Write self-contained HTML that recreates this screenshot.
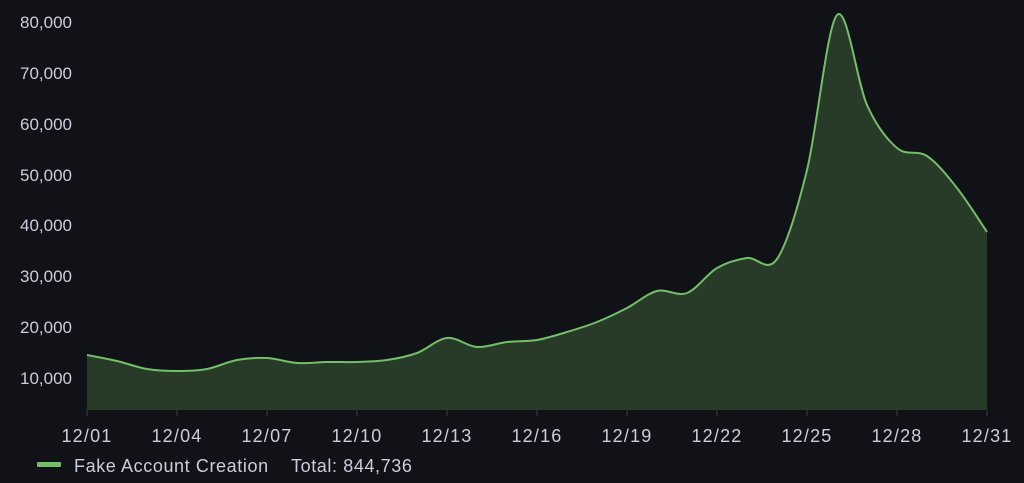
<!DOCTYPE html>
<html><head><meta charset="utf-8"><style>
html,body{margin:0;padding:0;background:#111217;width:1024px;height:483px;overflow:hidden}
svg{display:block}
text{font-family:"Liberation Sans",sans-serif;fill:#ccccdc;font-size:17px}
.xl text{font-size:18px;letter-spacing:1.2px}
.lg{font-size:18px;letter-spacing:0.6px}
</style></head><body>
<svg id="s" width="1024" height="483" viewBox="0 0 1024 483">
<g text-anchor="end">
<text x="72" y="28">80,000</text>
<text x="72" y="79">70,000</text>
<text x="72" y="130">60,000</text>
<text x="72" y="181">50,000</text>
<text x="72" y="231">40,000</text>
<text x="72" y="282">30,000</text>
<text x="72" y="333">20,000</text>
<text x="72" y="384">10,000</text>
</g>
<path id="area" fill="#283a28" d=""/>
<path id="line" fill="none" stroke="#73bf69" stroke-width="2" d=""/>
<g stroke="#3a3c42" stroke-width="1" id="ticks"></g>
<g text-anchor="middle" id="xl" class="xl"></g>
<rect x="37" y="462" width="24" height="5" rx="1" fill="#73bf69"/>
<text class="lg" x="74" y="472">Fake Account Creation</text>
<text class="lg" x="291" y="472">Total: 844,736</text>
</svg>
<script>
var ys=[355,361,369,371,369,360,358,363,362,362,360,353,338,347,342,340,332,322,308,291,293,268,258,259,170,15,105,148,156,188,232];
var p=ys.map(function(y,i){return [87+30*i,y]});
var d="M"+p[0][0]+","+p[0][1];
for(var i=0;i<p.length-1;i++){
 var p0=p[i-1]||p[i],p1=p[i],p2=p[i+1],p3=p[i+2]||p2;
 var c1=[p1[0]+(p2[0]-p0[0])/6,p1[1]+(p2[1]-p0[1])/6];
 var c2=[p2[0]-(p3[0]-p1[0])/6,p2[1]-(p3[1]-p1[1])/6];
 d+=" C"+c1[0]+","+c1[1]+" "+c2[0]+","+c2[1]+" "+p2[0]+","+p2[1];
}
document.getElementById("line").setAttribute("d",d);
document.getElementById("area").setAttribute("d",d+" L987,410 L87,410 Z");
var tk=document.getElementById("ticks"),xl=document.getElementById("xl");
var labs=["12/01","12/04","12/07","12/10","12/13","12/16","12/19","12/22","12/25","12/28","12/31"];
var ns="http://www.w3.org/2000/svg";
labs.forEach(function(l,i){
 var x=87+90*i;
 var ln=document.createElementNS(ns,"line");
 ln.setAttribute("x1",x);ln.setAttribute("x2",x);ln.setAttribute("y1",410);ln.setAttribute("y2",416);
 tk.appendChild(ln);
 var t=document.createElementNS(ns,"text");
 t.setAttribute("x",x);t.setAttribute("y",442);t.textContent=l;xl.appendChild(t);
});
</script>
</body></html>
